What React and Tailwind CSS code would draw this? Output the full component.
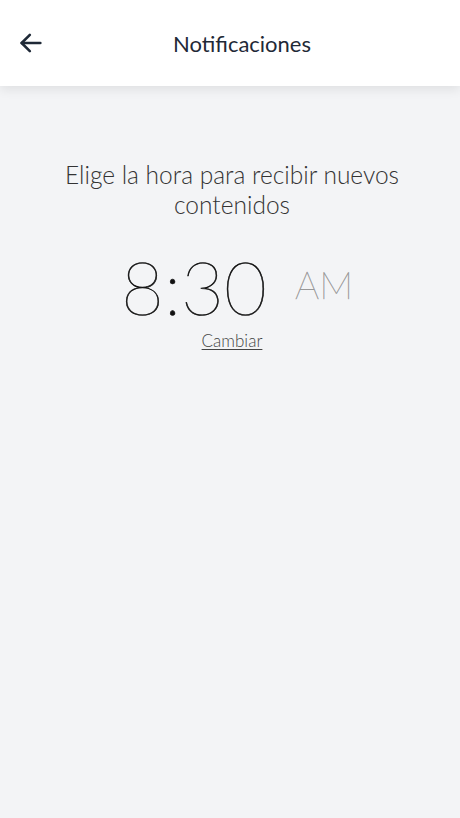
import React from "react";

const BackArrow = () => (
  <svg width="28" height="28" viewBox="0 0 24 24" fill="none" stroke="#1f2937" strokeWidth="2.2" strokeLinecap="round" strokeLinejoin="round">
    <path d="M20 12H4" />
    <path d="M11 5l-7 7 7 7" />
  </svg>
);

const App = () => {
  return (
    <div className="min-h-screen bg-[#f3f4f6] font-['Lato','Liberation_Sans',sans-serif]">
      {/* Header */}
      <div className="relative flex h-[86px] items-center justify-center bg-white pl-[24px] shadow-[0_4px_10px_rgba(0,0,0,0.08)]">
        <button className="absolute left-[17px] top-[29px]">
          <BackArrow />
        </button>
        <h1 className="text-[22px] text-[#1f2937]">Notificaciones</h1>
      </div>

      {/* Content */}
      <div className="flex flex-col items-center px-9 pl-[40px] pt-[74px]">
        <p className="text-center text-[24.5px] font-light leading-[30px] text-[#333]">
          Elige la hora para recibir nuevos contenidos
        </p>
        <div className="mt-[24px] flex items-center pl-[10px]">
          <span className="text-[74px] font-thin leading-[86px] text-[#111] [-webkit-text-stroke:0.6px_#111]">8:30</span>
          <span className="ml-[28px] mt-[-6px] text-[38px] font-thin leading-[50px] text-[#999] [-webkit-text-stroke:0.4px_#999]">AM</span>
        </div>
        <button className="mt-[-2px] text-[17px] font-light text-[#444] underline underline-offset-2">
          Cambiar
        </button>
      </div>
    </div>
  );
};

export default App;
